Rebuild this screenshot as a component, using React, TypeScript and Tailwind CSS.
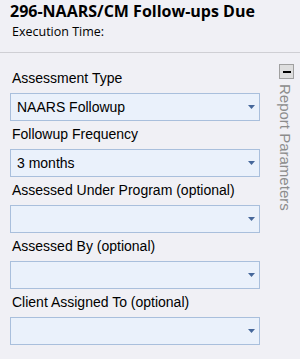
import React from "react";

const fields = [
  { label: "Assessment Type", value: "NAARS Followup" },
  { label: "Followup Frequency", value: "3 months" },
  { label: "Assessed Under Program (optional)", value: "" },
  { label: "Assessed By (optional)", value: "" },
  { label: "Client Assigned To (optional)", value: "" },
];

function Select({ value }: { value: string }) {
  return (
    <div className="flex h-[28px] w-[250px] items-center justify-between border border-[#a9bfdc] bg-[#eaf1fb] pl-[6px] pr-[4px]">
      <span className="text-[14px] leading-[16px] text-black">{value}</span>
      <svg width="7" height="4" viewBox="0 0 7 4">
        <polygon points="0,0 7,0 3.5,4" fill="#46679a" />
      </svg>
    </div>
  );
}

export default function App() {
  return (
    <div
      className="h-[359px] w-[300px] overflow-hidden bg-[#f0f0f5]"
      style={{ fontFamily: '"Liberation Sans", Arial, sans-serif' }}
    >
      <div className="h-[53px] border-b border-[#cfcfd4] px-[10px]">
        <div
          className="pt-[1px] text-[16px] font-bold leading-[20px] text-black"
          style={{ fontFamily: '"Open Sans", sans-serif' }}
        >
          296-NAARS/CM Follow-ups Due
        </div>
        <div
          className="pl-[2px] pt-[3px] text-[12.5px] leading-[16px] text-black"
          style={{ fontFamily: '"Open Sans", sans-serif' }}
        >
          Execution Time:
        </div>
      </div>
      <div className="flex">
        <div className="w-[269px] pl-[10px] pt-[17px]">
          {fields.map((f, i) => (
            <div key={i} className={i === 0 ? "" : "mt-[5px]"}>
              <div className="h-[16px] pl-[2px] text-[14px] leading-[16px] text-black">{f.label}</div>
              <div className="mt-[7px]">
                <Select value={f.value} />
              </div>
            </div>
          ))}
        </div>
        <div className="flex w-[31px] flex-col items-start pl-[10px] pt-[11px]">
          <div className="flex h-[15px] w-[15px] shrink-0 items-center justify-center border border-[#a0a0a0] bg-[#dedede]">
            <div className="h-[2px] w-[8px] bg-black" />
          </div>
          <div
            className="ml-[-1px] mt-[5px] text-[15px] leading-[14px] text-[#8c8c8c]"
            style={{ writingMode: "vertical-rl" }}
          >
            Report Parameters
          </div>
        </div>
      </div>
    </div>
  );
}
